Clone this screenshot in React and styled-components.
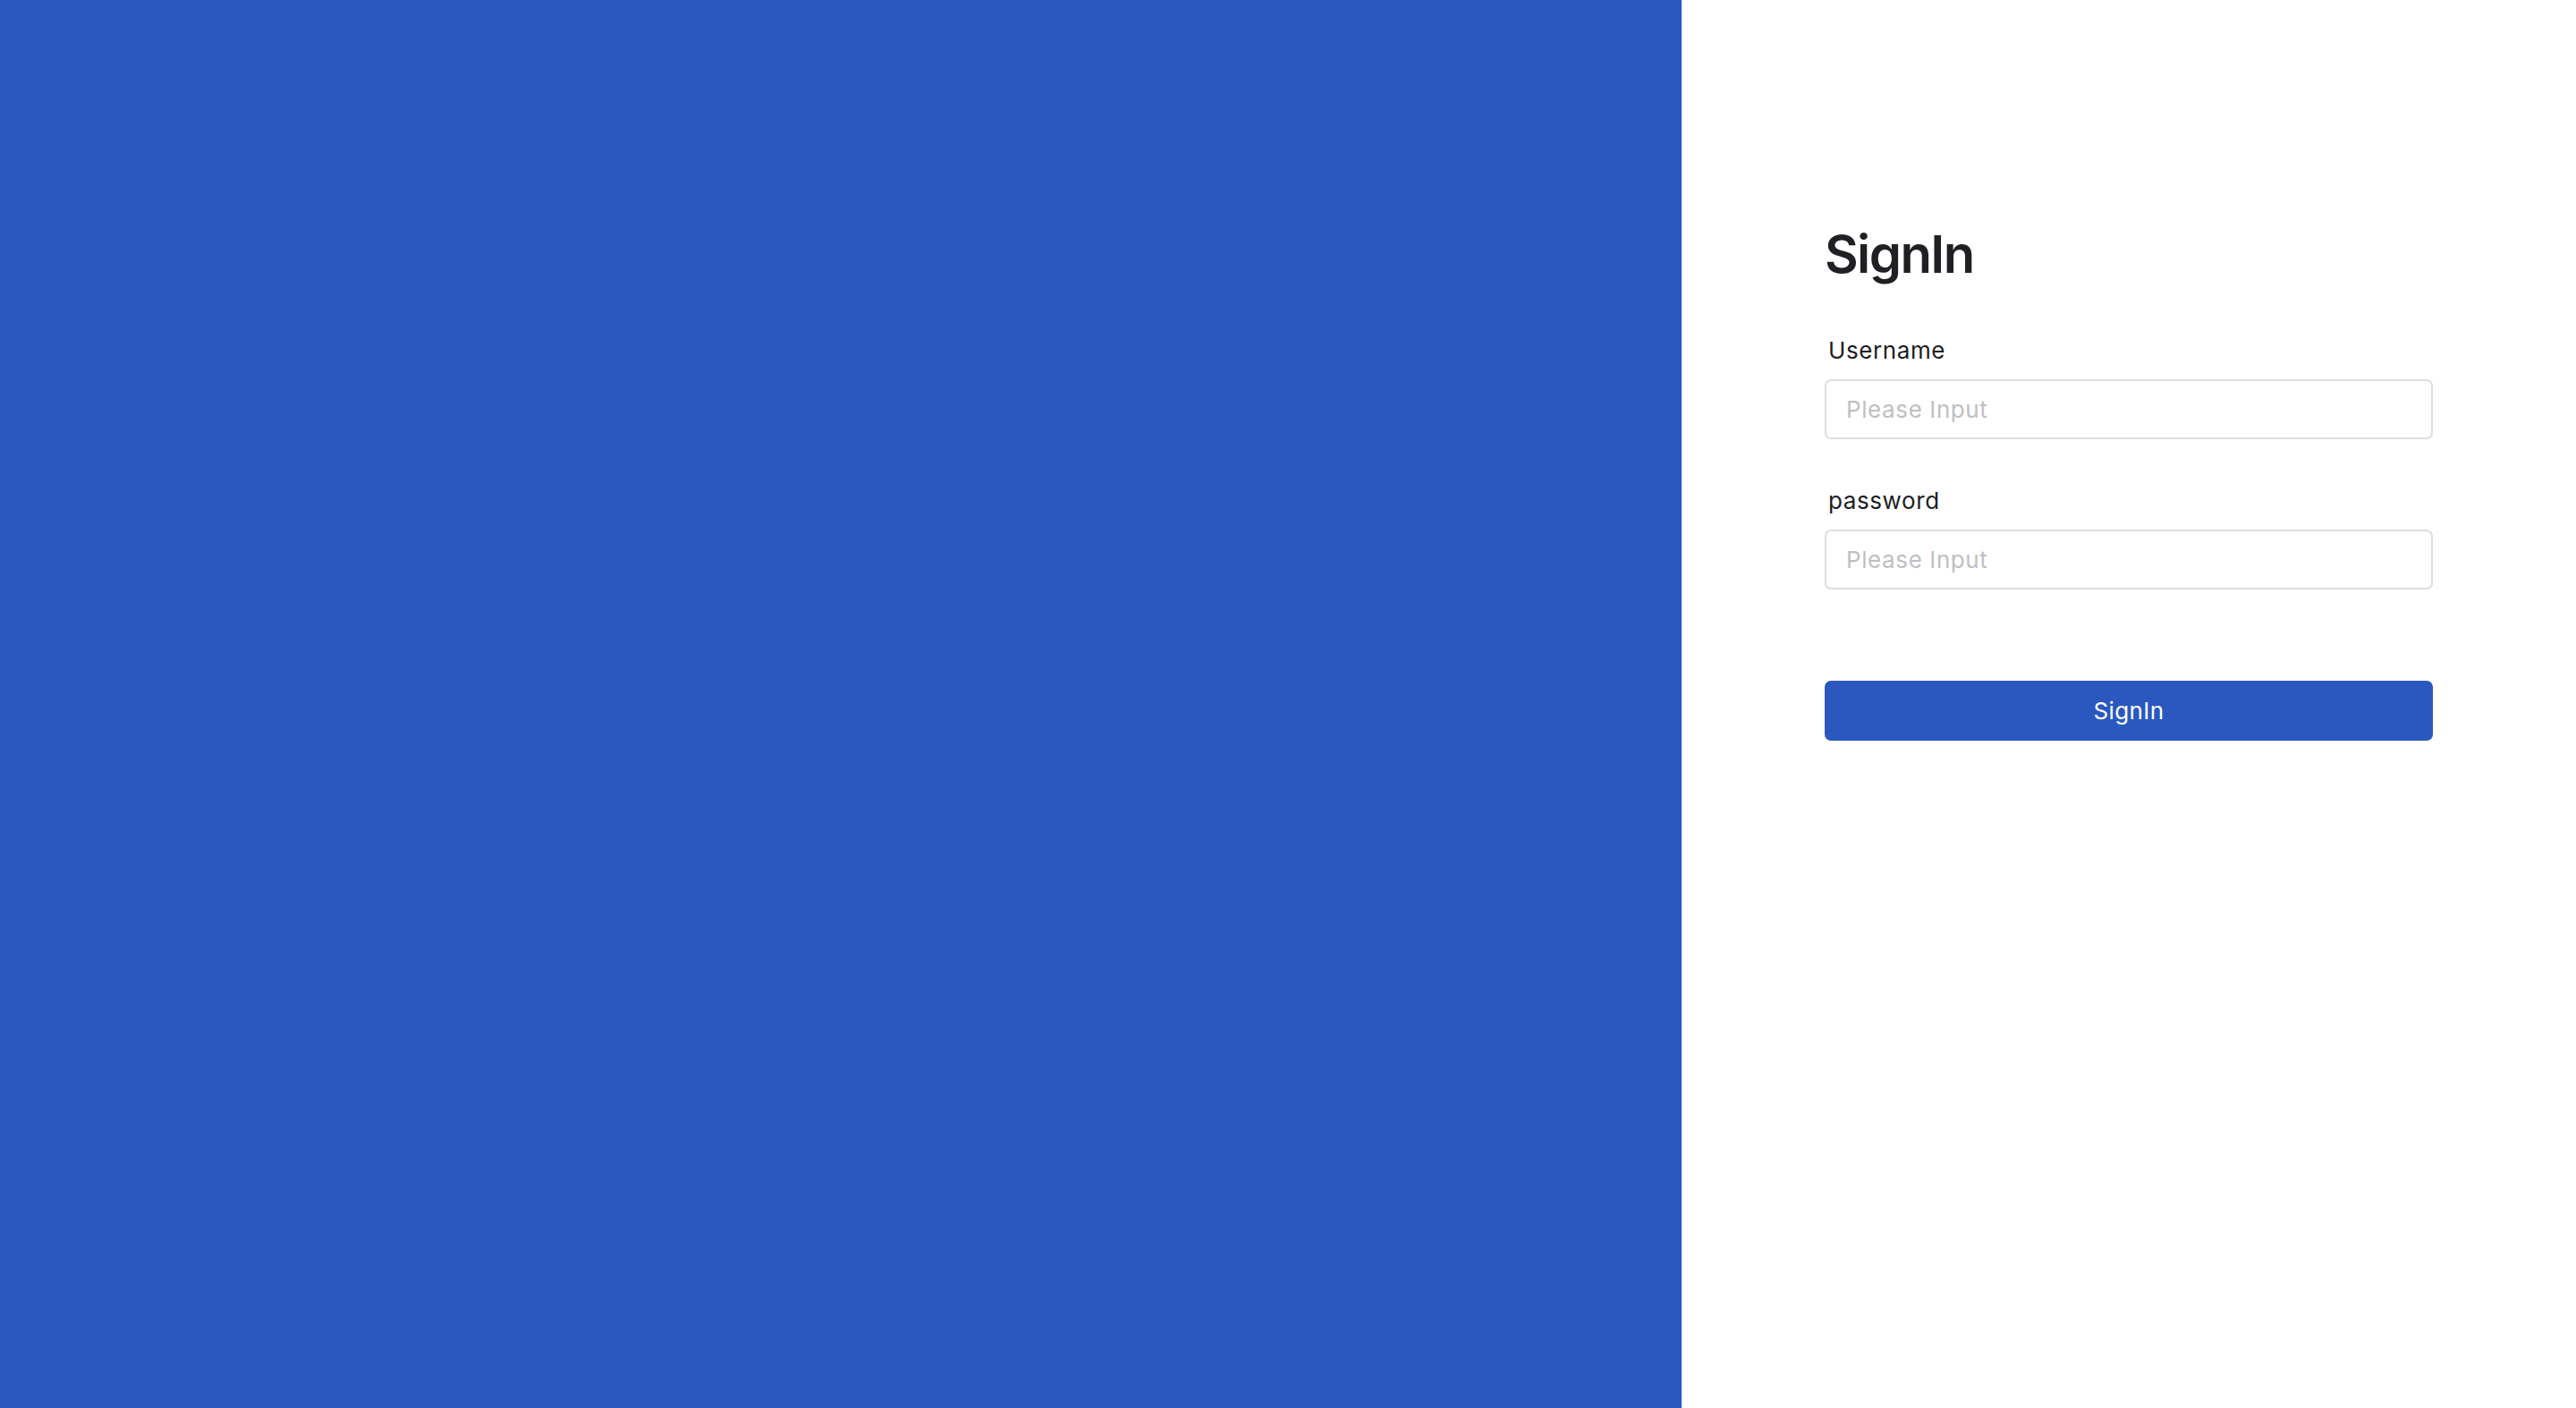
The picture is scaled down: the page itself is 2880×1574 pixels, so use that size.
import React from 'react'
import styled, { createGlobalStyle } from 'styled-components'

const GlobalStyle = createGlobalStyle`
    html, body, #root {
        margin: 0;
        padding: 0;
        height: 100%;
    }
    body {
        font-family: Inter, "Helvetica Neue", Arial, sans-serif;
        background: #ffffff;
    }
`

const Page = styled.div`
    display: flex;
    width: 100%;
    height: 100vh;
`

const Banner = styled.div`
    flex: 1;
    background: #2a58bf;
`

const FormSide = styled.div`
    width: 1000px;
    flex-shrink: 0;
    background: #ffffff;
    padding-top: 249px;
    box-sizing: border-box;
`

const Form = styled.form`
    width: 680px;
    margin: 0 auto;
    display: flex;
    flex-direction: column;
`

const Title = styled.h1`
    margin: 0 0 55px;
    font-size: 58px;
    line-height: 70px;
    font-weight: 600;
    color: #1f2023;
    letter-spacing: -1.6px;
`

const Field = styled.div`
    display: flex;
    flex-direction: column;
    gap: 14px;
    margin-bottom: ${props => props.spacing}px;
`

const Label = styled.label`
    font-size: 26px;
    line-height: 36px;
    color: #1d1d1f;
    padding-left: 4px;
    letter-spacing: 0.6px;
`

const Input = styled.input`
    box-sizing: border-box;
    width: 100%;
    height: 67px;
    padding: 0 22px;
    border: 2px solid #dedee2;
    border-radius: 7px;
    font-family: inherit;
    font-size: 26px;
    letter-spacing: 0.6px;
    color: #1d1d1f;
    outline: none;

    &::placeholder {
        color: #bfbfc3;
    }
`

const Button = styled.button`
    height: 67px;
    border: none;
    border-radius: 7px;
    background: #2a58bf;
    color: #ffffff;
    font-family: inherit;
    font-size: 26px;
    letter-spacing: 0.4px;
    cursor: pointer;
`

export default function App() {
    return (
        <>
            <GlobalStyle />
            <Page>
                <Banner />
                <FormSide>
                    <Form onSubmit={e => e.preventDefault()}>
                        <Title>SignIn</Title>
                        <Field spacing={51}>
                            <Label>Username</Label>
                            <Input placeholder="Please Input" />
                        </Field>
                        <Field spacing={102}>
                            <Label>password</Label>
                            <Input type="password" placeholder="Please Input" />
                        </Field>
                        <Button type="submit">SignIn</Button>
                    </Form>
                </FormSide>
            </Page>
        </>
    )
}
